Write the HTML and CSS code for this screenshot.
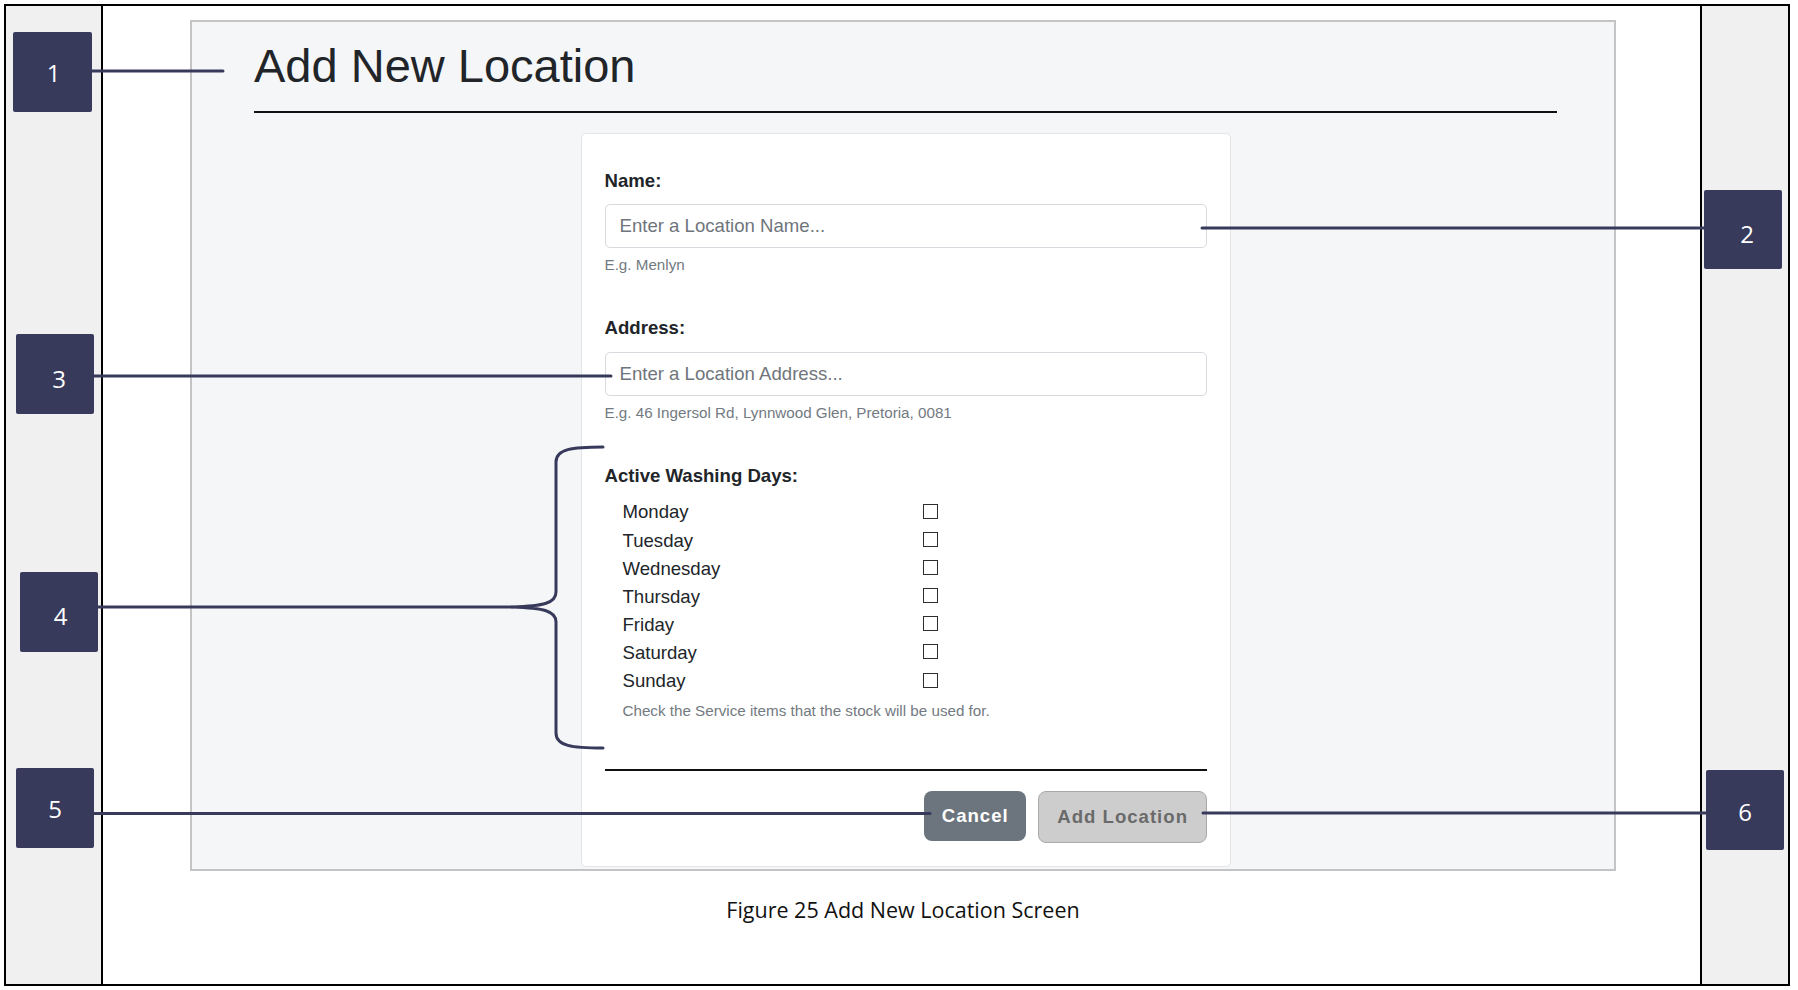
FILE: index.html
```html
<!DOCTYPE html>
<html lang="en">
<head>
<meta charset="utf-8">
<title>Figure 25 Add New Location Screen</title>
<link rel="stylesheet" href="styles.css">
</head>
<body>
<div class="frame">
  <aside class="side"></aside>
  <main class="stage">
    <section class="panel">
      <h1 class="title">Add New Location</h1>
      <div class="card">
        <form class="form">
          <div class="field">
            <label class="label" for="loc-name">Name:</label>
            <input class="input" id="loc-name" type="text" placeholder="Enter a Location Name...">
            <small class="help">E.g. Menlyn</small>
          </div>
          <div class="field">
            <label class="label" for="loc-addr">Address:</label>
            <input class="input" id="loc-addr" type="text" placeholder="Enter a Location Address...">
            <small class="help">E.g. 46 Ingersol Rd, Lynnwood Glen, Pretoria, 0081</small>
          </div>
          <div class="field">
            <span class="label">Active Washing Days:</span>
            <div class="days">
              <div class="day"><span>Monday</span><span class="box"></span></div>
              <div class="day"><span>Tuesday</span><span class="box"></span></div>
              <div class="day"><span>Wednesday</span><span class="box"></span></div>
              <div class="day"><span>Thursday</span><span class="box"></span></div>
              <div class="day"><span>Friday</span><span class="box"></span></div>
              <div class="day"><span>Saturday</span><span class="box"></span></div>
              <div class="day"><span>Sunday</span><span class="box"></span></div>
            </div>
            <small class="help help-days">Check the Service items that the stock will be used for.</small>
          </div>
          <div class="actions">
            <button type="button" class="btn btn-cancel">Cancel</button>
            <button type="button" class="btn btn-add">Add Location</button>
          </div>
        </form>
      </div>
    </section>
    <p class="caption">Figure 25 Add New Location Screen</p>
  </main>
  <aside class="side"></aside>
</div>

<div class="callouts">
  <svg class="leaders" width="1798" height="990" viewBox="0 0 1798 990">
    <g fill="none" stroke="#383a5c" stroke-width="3" stroke-linecap="round" stroke-linejoin="round">
      <path d="M92 71 H223"/>
      <path d="M1202 228 H1704"/>
      <path d="M94 376 H611"/>
      <path d="M98 607 H512"/>
      <path d="M94 813.5 H930"/>
      <path d="M1203 813 H1706"/>
      <path d="M603 447 C572 447 556 449 556 462 L556 592 C556 603 544 606 512 607 C544 608 556 611 556 622 L556 733 C556 746 572 748 603 748"/>
    </g>
  </svg>
  <div class="badge b1">1</div>
  <div class="badge b2">2</div>
  <div class="badge b3">3</div>
  <div class="badge b4">4</div>
  <div class="badge b5">5</div>
  <div class="badge b6">6</div>
</div>
</body>
</html>
```

FILE: styles.css
```css
html, body {
  margin: 0;
  padding: 0;
}

body {
  width: 1798px;
  height: 990px;
  overflow: hidden;
  background: #ffffff;
  font-family: "Liberation Sans", Arial, sans-serif;
  color: #212529;
  position: relative;
}

.frame {
  box-sizing: border-box;
  position: absolute;
  left: 4px;
  top: 4px;
  width: 1786px;
  height: 982px;
  border: 2px solid #000;
  display: grid;
  grid-template-columns: 95px 1601px 86px;
}

.side {
  background: #f0f0f0;
}

.stage {
  border-left: 2px solid #000;
  border-right: 2px solid #000;
  background: #ffffff;
  padding-top: 14px;
}

.panel {
  box-sizing: border-box;
  width: 1426px;
  margin-left: 87px;
  border: 2px solid #c4c4c4;
  background: #f5f6f7;
  padding: 17px 57px 2px 62px;
}

.title {
  margin: 0;
  font-size: 47px;
  font-weight: 400;
  line-height: 54px;
  color: #212529;
  padding-bottom: 18px;
  border-bottom: 2px solid #111;
}

.card {
  box-sizing: border-box;
  width: 650px;
  margin: 20px auto 0;
  background: #ffffff;
  border: 1px solid #e2e4e7;
  border-radius: 5px;
  padding: 36px 23px 23px;
}

.form {
  margin: 0;
}

.field + .field {
  margin-top: 43.5px;
}

.label {
  display: block;
  font-weight: 700;
  font-size: 18.6px;
  line-height: 21.4px;
  color: #212529;
  margin-bottom: 13px;
}

.input {
  display: block;
  box-sizing: border-box;
  width: 100%;
  height: 44px;
  margin: 0;
  border: 1px solid #d6d9dd;
  border-radius: 5px;
  padding: 0 14px;
  font-family: "Liberation Sans", Arial, sans-serif;
  font-size: 18.6px;
  color: #212529;
  background: #ffffff;
  outline: none;
}

.input::placeholder {
  color: #6f757b;
  opacity: 1;
}

.help {
  display: block;
  margin-top: 8px;
  font-size: 15.2px;
  line-height: 17.5px;
  color: #737a81;
}

.days {
  margin-top: -0.8px;
  padding-left: 18px;
}

.day {
  display: grid;
  grid-template-columns: 300px 15px;
  align-items: center;
  height: 28.1px;
  font-size: 18.6px;
  color: #212529;
}

.box {
  box-sizing: border-box;
  width: 15px;
  height: 15px;
  margin-top: -2px;
  border: 1px solid #2e2e2e;
  background: #ffffff;
}

.help-days {
  padding-left: 18px;
  margin-top: 7.3px;
}

.actions {
  margin-top: 49px;
  border-top: 2px solid #111;
  padding-top: 20px;
  display: flex;
  justify-content: flex-end;
  align-items: flex-start;
  gap: 12px;
}

.btn {
  box-sizing: border-box;
  margin: 0;
  font-family: "Liberation Sans", Arial, sans-serif;
  font-size: 18.6px;
  font-weight: 700;
  letter-spacing: 1px;
  border-radius: 8px;
  cursor: pointer;
}

.btn-cancel {
  height: 50px;
  padding: 0 17px 0 18px;
  border: 0;
  background: #6c757d;
  color: #ffffff;
}

.btn-add {
  height: 52px;
  padding: 0 17.5px 0 18.5px;
  border: 1px solid #a9a9a9;
  background: #cdcdcd;
  color: #6a6a6a;
}

.caption {
  margin: 25px 0 0;
  text-align: center;
  font-family: "Open Sans", "Noto Sans", sans-serif;
  font-size: 21.5px;
  line-height: 28px;
  color: #111;
  padding-left: 3px;
}

/* Annotation overlay */
.callouts {
  position: absolute;
  left: 0;
  top: 0;
  width: 1798px;
  height: 990px;
  pointer-events: none;
}

.leaders {
  position: absolute;
  left: 0;
  top: 0;
}

.badge {
  box-sizing: border-box;
  position: absolute;
  width: 78px;
  height: 80px;
  background: #383a5c;
  border-radius: 2px;
  color: #ffffff;
  font-family: "Open Sans", "Noto Sans", sans-serif;
  font-size: 24px;
  display: flex;
  align-items: center;
  justify-content: center;
}

.b1 { left: 13px; top: 32px; width: 79px; padding-left: 2px; }
.b2 { left: 1704px; top: 190px; height: 79px; padding: 8px 0 0 8px; }
.b3 { left: 16px; top: 334px; padding: 9px 0 0 8px; }
.b4 { left: 20px; top: 572px; padding: 6px 0 0 3px; }
.b5 { left: 16px; top: 768px; }
.b6 { left: 1706px; top: 770px; padding-top: 2px; }
```
